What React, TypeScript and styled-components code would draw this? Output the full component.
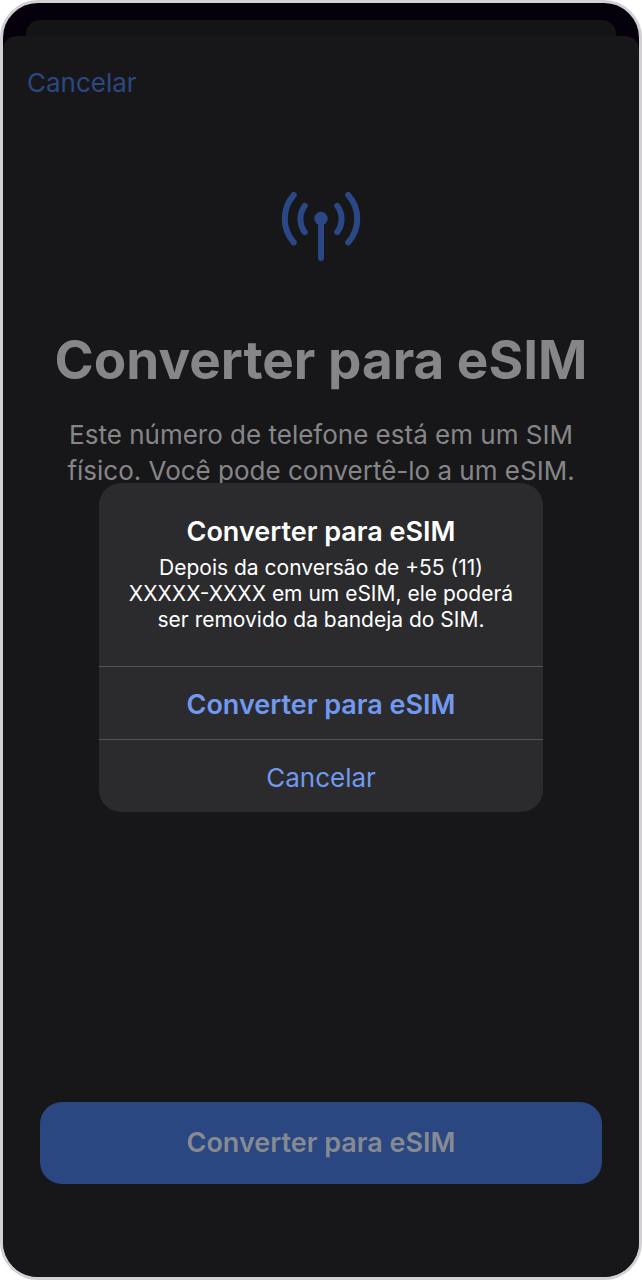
import React from "react";
import styled, { createGlobalStyle } from "styled-components";

const GlobalStyle = createGlobalStyle`
  *, *::before, *::after { box-sizing: border-box; }
  body {
    margin: 0;
    background: #ffffff;
    font-family: Inter, "Liberation Sans", sans-serif;
  }
  h1, h2, p { margin: 0; }
  button { font: inherit; border: 0; cursor: pointer; }
`;

const Phone = styled.div`
  position: relative;
  display: flex;
  flex-direction: column;
  min-height: 100vh;
  padding-top: 17px;
  border: 3px solid #d2d0d2;
  border-radius: 38px;
  background: #06000c;
  overflow: hidden;
`;

const BackSheet = styled.div`
  height: 16px;
  margin: 0 23px;
  border-radius: 14px 14px 0 0;
  background: #141415;
`;

const Sheet = styled.main`
  flex: 1;
  display: flex;
  flex-direction: column;
  border-radius: 14px 14px 0 0;
  background: #171719;
  color: #868688;
`;

const NavBar = styled.header`
  padding: 29px 24px 28px;
`;

const NavButton = styled.button`
  padding: 0;
  background: none;
  color: #2b4880;
  font-size: 26px;
  line-height: 36px;
`;

const Intro = styled.section`
  flex: 1;
  display: flex;
  flex-direction: column;
  align-items: center;
  padding: 62px 24px 24px;
  text-align: center;
`;

const Antenna = styled.svg`
  width: 80px;
  height: 72px;
  color: #2b4886;
`;

const Title = styled.h1`
  margin-top: 65px;
  font-size: 53px;
  line-height: 64px;
  font-weight: 700;
`;

const Description = styled.p`
  max-width: 530px;
  margin-top: 25px;
  font-size: 26px;
  line-height: 36px;
`;

const Footer = styled.footer`
  padding: 0 37px 93px;
`;

const PrimaryButton = styled.button`
  width: 100%;
  height: 82px;
  border-radius: 22px;
  background: #2a4781;
  color: #868a93;
  font-size: 27px;
  line-height: 36px;
  font-weight: 600;
`;

const Overlay = styled.div`
  position: absolute;
  inset: 0;
  display: flex;
  align-items: center;
  justify-content: center;
  padding: 15px 24px 0;
`;

const Dialog = styled.div`
  width: 100%;
  max-width: 444px;
  border-radius: 22px;
  background: #2b2b2d;
  color: #ffffff;
  text-align: center;
  overflow: hidden;
`;

const DialogBody = styled.div`
  padding: 31px 24px 33px;
`;

const DialogTitle = styled.h2`
  font-size: 27px;
  line-height: 36px;
  font-weight: 600;
`;

const DialogText = styled.p`
  margin-top: 5px;
  font-size: 21px;
  line-height: 26px;
`;

const DialogAction = styled.button<{ $strong?: boolean }>`
  display: block;
  width: 100%;
  height: 73px;
  padding: 3px 24px 0;
  border-top: 1px solid #555557;
  background: none;
  color: #7299f0;
  font-size: ${(p) => (p.$strong ? 27 : 26)}px;
  line-height: 36px;
  font-weight: ${(p) => (p.$strong ? 600 : 400)};
`;

export default function App() {
  return (
    <>
      <GlobalStyle />
      <Phone>
        <BackSheet />
        <Sheet>
          <NavBar>
            <NavButton type="button">Cancelar</NavButton>
          </NavBar>
          <Intro>
            <Antenna
              viewBox="0 0 80 72"
              fill="none"
              stroke="currentColor"
              strokeWidth="6"
              strokeLinecap="round"
              aria-hidden="true"
            >
              <path d="M12.8 4A35.7 35.7 0 0 0 12.8 51.4" />
              <path d="M23.8 14.8A22 22 0 0 0 23.8 41.2" />
              <path d="M56.2 14.8A22 22 0 0 1 56.2 41.2" />
              <path d="M67.2 4A35.7 35.7 0 0 1 67.2 51.4" />
              <path d="M40 28V67" />
              <circle cx="40" cy="27.5" r="6.7" fill="currentColor" stroke="none" />
            </Antenna>
            <Title>Converter para eSIM</Title>
            <Description>
              Este número de telefone está em um SIM físico. Você pode
              convertê-lo a um eSIM.
            </Description>
          </Intro>
          <Footer>
            <PrimaryButton type="button">Converter para eSIM</PrimaryButton>
          </Footer>
        </Sheet>
        <Overlay>
          <Dialog
            role="alertdialog"
            aria-modal="true"
            aria-labelledby="dialog-title"
            aria-describedby="dialog-text"
          >
            <DialogBody>
              <DialogTitle id="dialog-title">Converter para eSIM</DialogTitle>
              <DialogText id="dialog-text">
                Depois da conversão de +55 (11)
                <br />
                XXXXX-XXXX em um eSIM, ele poderá
                <br />
                ser removido da bandeja do SIM.
              </DialogText>
            </DialogBody>
            <DialogAction type="button" $strong>
              Converter para eSIM
            </DialogAction>
            <DialogAction type="button">Cancelar</DialogAction>
          </Dialog>
        </Overlay>
      </Phone>
    </>
  );
}
